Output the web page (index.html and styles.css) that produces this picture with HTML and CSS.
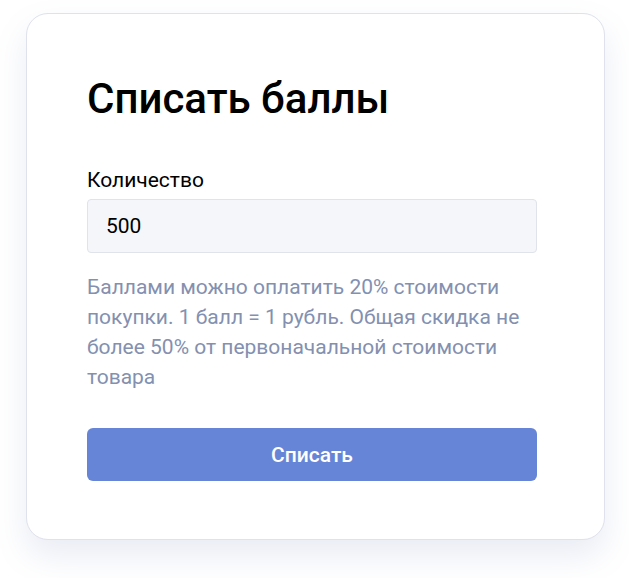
FILE: index.html
```html
<!DOCTYPE html>
<html lang="ru">
<head>
    <meta charset="UTF-8">
    <meta name="viewport" content="width=device-width, initial-scale=1.0">
    <title>Списать баллы</title>
    <link rel="stylesheet" href="styles.css">
</head>
<body>

    <!-- Points write-off card -->
    <div class="card">
        <h1 class="card-title">Списать баллы</h1>

        <form class="form">
            <label class="field-label" for="amount">Количество</label>
            <input class="field-input" id="amount" type="text" value="500">

            <p class="hint">Баллами можно оплатить 20% стоимости покупки. 1 балл = 1 рубль. Общая скидка не более 50% от первоначальной стоимости товара</p>

            <button class="btn" type="button">Списать</button>
        </form>
    </div>

</body>
</html>
```

FILE: styles.css
```css
/* Basic reset */
* {
    margin: 0;
    padding: 0;
    box-sizing: border-box;
}

html {
    background: #ffffff;
}

body {
    min-height: 100vh;
    background: #ffffff;
    font-family: Roboto, "Noto Sans", Arial, sans-serif;
    color: #000000;
    padding: 13px 24px 0 26px;
}

/* Card */
.card {
    width: 579px;
    background: #ffffff;
    border: 1px solid #dfe1ec;
    border-radius: 22px;
    padding: 60px 60px 58px 60px;
    box-shadow: 0 16px 32px rgba(110, 125, 180, 0.15);
}

.card-title {
    font-size: 42px;
    font-weight: 500;
    line-height: 50px;
    margin-bottom: 44px;
}

.form {
    width: 450px;
    display: flex;
    flex-direction: column;
}

.field-label {
    font-size: 21px;
    line-height: 24px;
    margin-bottom: 7px;
}

.field-input {
    height: 54px;
    background: #f5f6fa;
    border: 1px solid #e1e3eb;
    border-radius: 4px;
    padding: 0 18px;
    font-family: inherit;
    font-size: 21px;
    color: #000000;
    outline: none;
}

/* Hint under the field */
.hint {
    margin-top: 19px;
    font-size: 21px;
    line-height: 30px;
    color: #8390b0;
}

.btn {
    margin-top: 36px;
    height: 53px;
    border: none;
    border-radius: 6px;
    background: #6785d6;
    color: #ffffff;
    font-family: inherit;
    font-size: 21px;
    font-weight: 500;
    cursor: pointer;
}
```
